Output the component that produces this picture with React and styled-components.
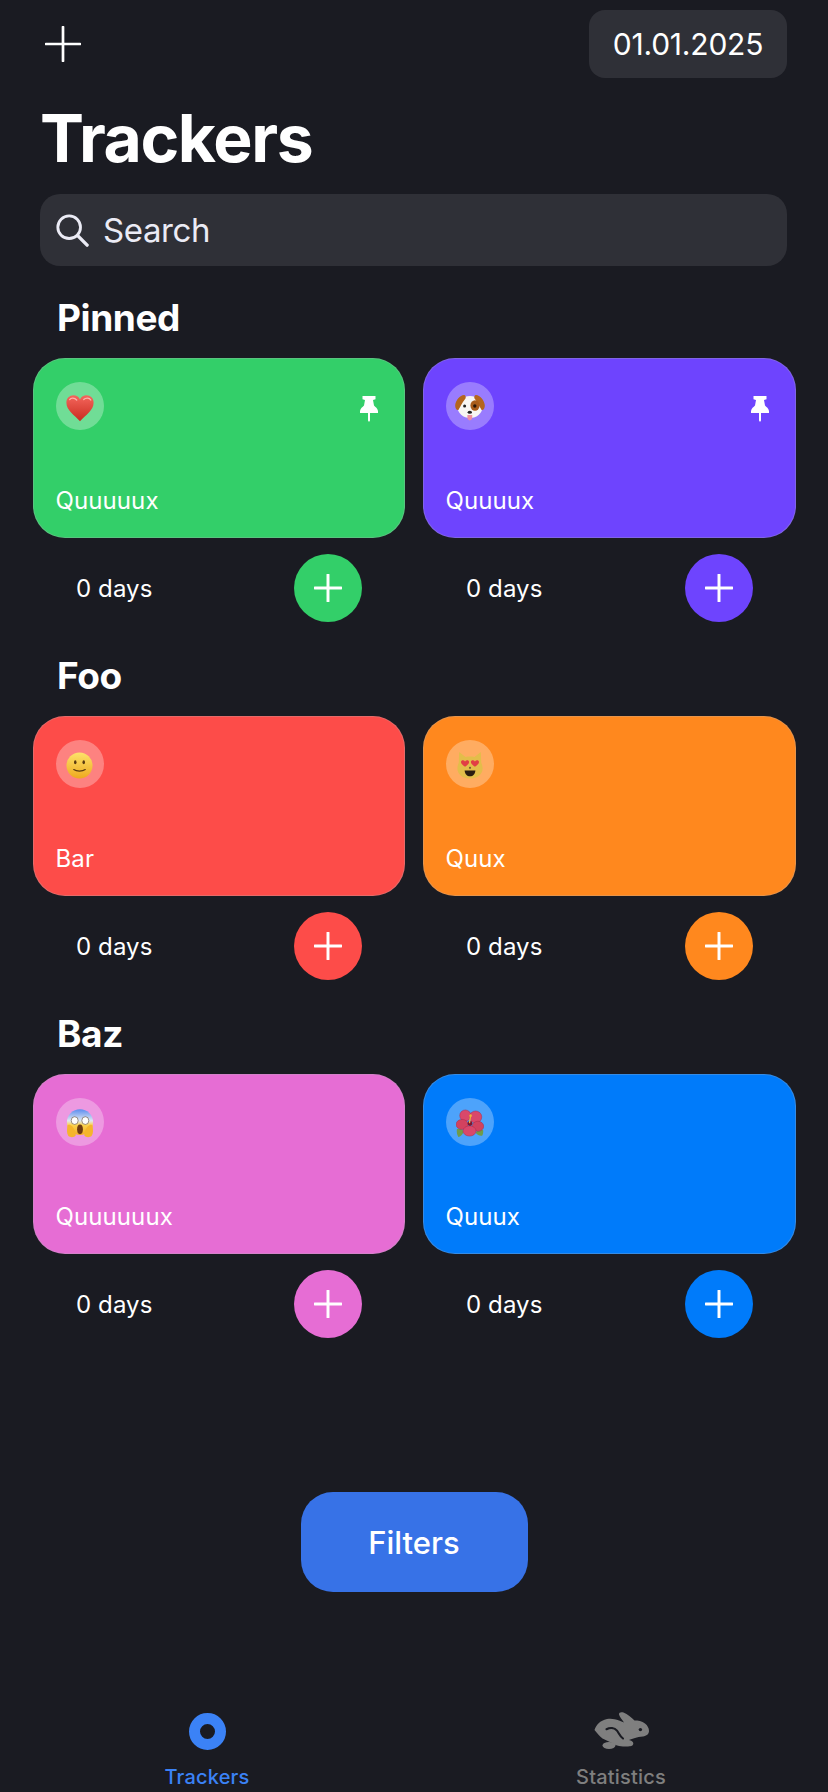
import React from 'react';
import styled, { createGlobalStyle } from 'styled-components';

const GlobalStyle = createGlobalStyle`
  html, body {
    margin: 0;
    padding: 0;
    background: #1a1b22;
  }
  body {
    font-family: Inter, "Noto Sans", "Liberation Sans", sans-serif;
    color: #fff;
  }
`;

const Page = styled.div`
  width: 828px;
  height: 1792px;
  overflow: hidden;
  display: flex;
  flex-direction: column;
  background: #1a1b22;
`;

const TopBar = styled.div`
  display: flex;
  justify-content: space-between;
  align-items: center;
  padding: 10px 41px 0 45px;
`;

const DateChip = styled.div`
  width: 198px;
  height: 68px;
  display: flex;
  align-items: center;
  justify-content: center;
  border-radius: 16px;
  background: #2f3037;
  font-size: 30px;
  letter-spacing: -0.2px;
`;

const Title = styled.h1`
  margin: 17px 0 0 40px;
  height: 86px;
  line-height: 86px;
  font-size: 66px;
  font-weight: 700;
  letter-spacing: -1.4px;
`;

const SearchBar = styled.div`
  margin: 13px 41px 0 40px;
  height: 72px;
  display: flex;
  align-items: center;
  gap: 14px;
  padding-left: 15px;
  border-radius: 20px;
  background: #2f3037;
  color: #ebebf5;
  font-size: 33px;
  letter-spacing: -0.4px;
`;

const Section = styled.section`
  margin: 35px 0 0 33px;
  & + & {
    margin-top: 37px;
  }
`;

const SectionTitle = styled.h2`
  margin: 0 0 23px 24px;
  height: 34px;
  line-height: 34px;
  font-size: 37px;
  font-weight: 700;
  letter-spacing: -0.4px;
`;

const CardGrid = styled.div`
  display: grid;
  grid-template-columns: 372px 373px;
  column-gap: 18px;
`;

const Card = styled.div`
  box-sizing: border-box;
  height: 180px;
  position: relative;
  display: flex;
  flex-direction: column;
  justify-content: space-between;
  padding: 22.5px 21.5px 21.5px;
  border-radius: 32px;
  border: 1.5px solid rgba(174, 175, 180, 0.3);
  background: ${(p) => p.$color};
`;

const EmojiCircle = styled.div`
  box-sizing: border-box;
  width: 48px;
  height: 48px;
  padding-top: 4px;
  border-radius: 50%;
  display: flex;
  align-items: center;
  justify-content: center;
  background: rgba(255, 255, 255, 0.3);
`;

const PinMark = styled.svg`
  position: absolute;
  top: 37px;
  right: 26px;
  width: 18px;
  height: 26px;
`;

const CardName = styled.div`
  font-size: 24px;
  line-height: 30px;
  letter-spacing: 0.1px;
`;

const CardFooter = styled.div`
  display: flex;
  justify-content: space-between;
  align-items: center;
  padding: 16px 43px 0 43px;
`;

const DaysLabel = styled.div`
  font-size: 24px;
  letter-spacing: 0.1px;
`;

const RoundPlus = styled.button`
  width: 68px;
  height: 68px;
  padding: 0;
  border: none;
  border-radius: 50%;
  display: flex;
  align-items: center;
  justify-content: center;
  background: ${(p) => p.$color};
`;

const FiltersButton = styled.button`
  align-self: center;
  margin-top: 154px;
  width: 227px;
  height: 100px;
  border: none;
  border-radius: 32px;
  background: #3772e7;
  color: #fff;
  font-family: inherit;
  font-size: 31px;
  font-weight: 500;
`;

const TabBar = styled.nav`
  margin-top: auto;
  display: grid;
  grid-template-columns: 414px 414px;
  height: 81px;
`;

const Tab = styled.div`
  display: flex;
  flex-direction: column;
  align-items: center;
  color: ${(p) => p.$color};
  font-size: 20px;
  line-height: 24px;
  font-weight: 500;
  letter-spacing: 0.2px;
`;

const TabIconSlot = styled.div`
  height: 40px;
  display: flex;
  align-items: center;
  justify-content: center;
  margin-bottom: 14px;
`;

const TabRing = styled.div`
  box-sizing: border-box;
  width: 37px;
  height: 37px;
  border-radius: 50%;
  border: 11px solid #3b82f6;
`;

const Plus = ({ size, stroke }) => (
  <svg width={size} height={size} viewBox="0 0 36 36" fill="none">
    <path d="M18 1V35M1 18H35" stroke="#fff" strokeWidth={stroke} strokeLinecap="round" />
  </svg>
);

const SearchIcon = () => (
  <svg width="34" height="34" viewBox="0 0 36 36" fill="none">
    <circle cx="15" cy="15" r="12" stroke="#ebebf5" strokeWidth="3" />
    <path d="M24 24L34 34" stroke="#ebebf5" strokeWidth="3.6" strokeLinecap="round" />
  </svg>
);

const Pin = () => (
  <PinMark viewBox="0 0 18 26">
    <path
      d="M2.5 0H15.5V3.2L13 4L14 9.5C15.5 11 17.6 12.4 18 15V17H10V24.5L9 26L8 24.5V17H0V15C.4 12.4 2.5 11 4 9.5L5 4L2.5 3.2Z"
      fill="#fff"
    />
  </PinMark>
);

const Hare = () => (
  <svg width="56" height="40" viewBox="7 6 56 40">
    <path
      fill="#7f7f7f"
      d="M8.5 25C10 20 14 15.5 21 14C25 13.2 29 14 33 15.5L38 17.5C36 14 33.5 12 33 9.5C32.8 7.5 35 6.6 37.5 7.6C41.5 9.2 45.5 13 48.5 15.5C52 15.5 56 16 59 18.5C61.5 20.5 63 23 63 26C63 29 60.5 31 57 31.5C53.5 32 51.5 32 49 33C47 33.8 44.5 34.5 43 35C45 35.4 47.5 36.5 47.3 38.8C47 41.2 44 41.5 41 41.5C36 41.5 29.5 41 27 38.5L16.5 33.5C13.5 31.5 11.5 28.5 8.5 25Z"
    />
    <ellipse cx="23" cy="40.5" rx="6.5" ry="3.4" fill="#7f7f7f" />
    <path d="M20.5 24.2C24 22.4 28.5 22.6 31 25.6C33 28.2 33.5 30.8 37 33.5" fill="none" stroke="#1a1b22" strokeWidth="2.1" strokeLinecap="round" />
    <circle cx="54.4" cy="24.6" r="1.7" fill="#1a1b22" />
  </svg>
);

const Heart = () => (
  <svg width="30" height="30" viewBox="0 0 32 32">
    <defs>
      <linearGradient id="heartFill" x1="0" y1="0" x2="0" y2="1">
        <stop offset="0" stopColor="#f4665c" />
        <stop offset="1" stopColor="#c92c20" />
      </linearGradient>
    </defs>
    <path d="M16 30C10 24 1.5 18.5 1.5 10.5C1.5 5.5 5 2.5 9 2.5C12 2.5 14.6 4 16 7C17.4 4 20 2.5 23 2.5C27 2.5 30.5 5.5 30.5 10.5C30.5 18.5 22 24 16 30Z" fill="url(#heartFill)" />
    <path d="M5 7C6.5 5 10 5 12.5 7.5" stroke="#fbb4ac" strokeWidth="1.4" fill="none" strokeLinecap="round" />
    <path d="M20 7C22 5 26 5 27.5 7.5" stroke="#fbb4ac" strokeWidth="1.4" fill="none" strokeLinecap="round" />
  </svg>
);

const Dog = () => (
  <svg width="30" height="27" viewBox="0 0 30 27">
    <ellipse cx="15" cy="13" rx="12.5" ry="11" fill="#f8f6f3" />
    <path d="M9 1C5 1.5 .8 6 .2 11C0 14 1.4 16.4 3.4 16C5.4 13 6.8 9 10.5 4.5C11.2 3 10.4 1 9 1Z" fill="#b4651c" />
    <path d="M21 1C25 1.5 29.2 6 29.8 11C30 14 28.6 16.4 26.6 16C24.6 13 23.2 9 19.5 4.5C18.8 3 19.6 1 21 1Z" fill="#b4651c" />
    <ellipse cx="20" cy="11.5" rx="4.6" ry="5.2" fill="#a95d1a" />
    <circle cx="9.6" cy="12" r="1.5" fill="#222" />
    <circle cx="19.8" cy="12" r="1.7" fill="#2a1606" />
    <ellipse cx="14.8" cy="18.2" rx="2.2" ry="1.5" fill="#222" />
    <path d="M12.4 21H17.2V23.6C17.2 25.4 16.1 26.4 14.8 26.4C13.5 26.4 12.4 25.4 12.4 23.6Z" fill="#ee8fa0" />
  </svg>
);

const Smile = () => (
  <svg width="27" height="27" viewBox="0 0 28 28">
    <defs>
      <linearGradient id="smileFill" x1="0" y1="0" x2="0" y2="1">
        <stop offset="0" stopColor="#fde26a" />
        <stop offset="1" stopColor="#eea91f" />
      </linearGradient>
    </defs>
    <circle cx="14" cy="14" r="13.5" fill="url(#smileFill)" />
    <ellipse cx="9.6" cy="10.6" rx="1.3" ry="2" fill="#5a3a10" />
    <ellipse cx="18.4" cy="10.6" rx="1.3" ry="2" fill="#5a3a10" />
    <path d="M8 18.2C11 20.4 17 20.4 20 18.2" stroke="#5a3a10" strokeWidth="1.2" fill="none" strokeLinecap="round" />
  </svg>
);

const CatHearts = () => (
  <svg width="28" height="27" viewBox="0 0 28 30">
    <path d="M2 0L9 5.5C12 5 16 5 19 5.5L26 0L26.5 12C27.5 14 28 16 28 18C28 25 22 29.5 14 29.5C6 29.5 0 25 0 18C0 16 .5 14 1.5 12Z" fill="#e3bd4a" />
    <path d="M8 20.5H20C19.6 24.5 17.3 27 14 27C10.7 27 8.4 24.5 8 20.5Z" fill="#2a1c10" />
    <circle cx="14" cy="17.6" r="1.2" fill="#7a5a30" />
    <path d="M8.5 16.5C5.6 14.3 4 13 4 11.2C4 9.2 7 8.5 8.5 10.5C10 8.5 13 9.2 13 11.2C13 13 11.4 14.3 8.5 16.5Z" fill="#e23d45" />
    <path d="M19.5 16.5C16.6 14.3 15 13 15 11.2C15 9.2 18 8.5 19.5 10.5C21 8.5 24 9.2 24 11.2C24 13 22.4 14.3 19.5 16.5Z" fill="#e23d45" />
  </svg>
);

const Scream = () => (
  <svg width="28" height="29" viewBox="0 0 28 30">
    <defs>
      <linearGradient id="screamFill" x1="0" y1="0" x2="0" y2="1">
        <stop offset="0" stopColor="#5b8cf0" />
        <stop offset=".45" stopColor="#dfe8f2" />
        <stop offset=".62" stopColor="#fbd24e" />
        <stop offset="1" stopColor="#f3af27" />
      </linearGradient>
    </defs>
    <ellipse cx="14" cy="13.5" rx="13.5" ry="13.3" fill="url(#screamFill)" />
    <ellipse cx="8.5" cy="12" rx="3.6" ry="4" fill="#fff" stroke="#5a4630" strokeWidth=".6" />
    <ellipse cx="19.5" cy="12" rx="3.6" ry="4" fill="#fff" stroke="#5a4630" strokeWidth=".6" />
    <ellipse cx="14" cy="21" rx="3" ry="5" fill="#6d3a12" />
    <path d="M1 17C.5 21 0 25 2 28C4 29.6 8 29.6 9.5 27.4C10 24 8.5 21 6 18C4 16.2 2 15.6 1 17Z" fill="#f5b52c" />
    <path d="M27 17C27.5 21 28 25 26 28C24 29.6 20 29.6 18.5 27.4C18 24 19.5 21 22 18C24 16.2 26 15.6 27 17Z" fill="#f5b52c" />
  </svg>
);

const Hibiscus = () => (
  <svg width="28" height="29" viewBox="0 0 30 30">
    <path d="M1 21C4 20 7 21 8 23.5C7.5 27 4.5 29 2.5 29.5C1 27 .5 24 1 21Z" fill="#6f9b4a" />
    <path d="M29 22C26 21 23 22 21 25C23 27.5 25.5 28.5 28 28C29 26.5 29.5 24 29 22Z" fill="#6f9b4a" />
    <ellipse cx="10" cy="6.5" rx="6" ry="6" fill="#d9486a" stroke="#a92a48" strokeWidth=".5" />
    <ellipse cx="21" cy="8" rx="6.6" ry="6.4" fill="#d9486a" stroke="#a92a48" strokeWidth=".5" />
    <ellipse cx="6.5" cy="16" rx="6.4" ry="5.4" fill="#d2425f" stroke="#a92a48" strokeWidth=".5" />
    <ellipse cx="23.5" cy="18" rx="6.2" ry="5.4" fill="#d2425f" stroke="#a92a48" strokeWidth=".5" />
    <ellipse cx="14.5" cy="23" rx="7" ry="5.5" fill="#d9486a" stroke="#a92a48" strokeWidth=".5" />
    <circle cx="15" cy="15" r="2.6" fill="#7d1530" />
    <path d="M14.5 14L15.5 7" stroke="#eeb23a" strokeWidth="1.4" strokeLinecap="round" />
    <circle cx="15.6" cy="6.6" r="1.4" fill="#eeb23a" />
  </svg>
);

const sections = [
  {
    title: 'Pinned',
    items: [
      { name: 'Quuuuux', color: '#33cf69', Emoji: Heart, pinned: true },
      { name: 'Quuuux', color: '#6e44fe', Emoji: Dog, pinned: true },
    ],
  },
  {
    title: 'Foo',
    items: [
      { name: 'Bar', color: '#fd4c49', Emoji: Smile },
      { name: 'Quux', color: '#ff881e', Emoji: CatHearts },
    ],
  },
  {
    title: 'Baz',
    items: [
      { name: 'Quuuuuux', color: '#e66dd4', Emoji: Scream },
      { name: 'Quuux', color: '#007bfa', Emoji: Hibiscus },
    ],
  },
];

const Tracker = ({ name, color, Emoji, pinned }) => (
  <div>
    <Card $color={color}>
      <EmojiCircle>
        <Emoji />
      </EmojiCircle>
      {pinned && <Pin />}
      <CardName>{name}</CardName>
    </Card>
    <CardFooter>
      <DaysLabel>0 days</DaysLabel>
      <RoundPlus $color={color}>
        <Plus size={28} stroke={3.8} />
      </RoundPlus>
    </CardFooter>
  </div>
);

const App = () => {
  return (
    <Page>
      <GlobalStyle />
      <TopBar>
        <Plus size={36} stroke={2.7} />
        <DateChip>01.01.2025</DateChip>
      </TopBar>
      <Title>Trackers</Title>
      <SearchBar>
        <SearchIcon />
        Search
      </SearchBar>
      {sections.map((s) => (
        <Section key={s.title}>
          <SectionTitle>{s.title}</SectionTitle>
          <CardGrid>
            {s.items.map((item) => (
              <Tracker key={item.name} {...item} />
            ))}
          </CardGrid>
        </Section>
      ))}
      <FiltersButton>Filters</FiltersButton>
      <TabBar>
        <Tab $color="#3b82f6">
          <TabIconSlot>
            <TabRing />
          </TabIconSlot>
          Trackers
        </Tab>
        <Tab $color="#7f7f7f">
          <TabIconSlot>
            <Hare />
          </TabIconSlot>
          Statistics
        </Tab>
      </TabBar>
    </Page>
  );
};

export default App;
